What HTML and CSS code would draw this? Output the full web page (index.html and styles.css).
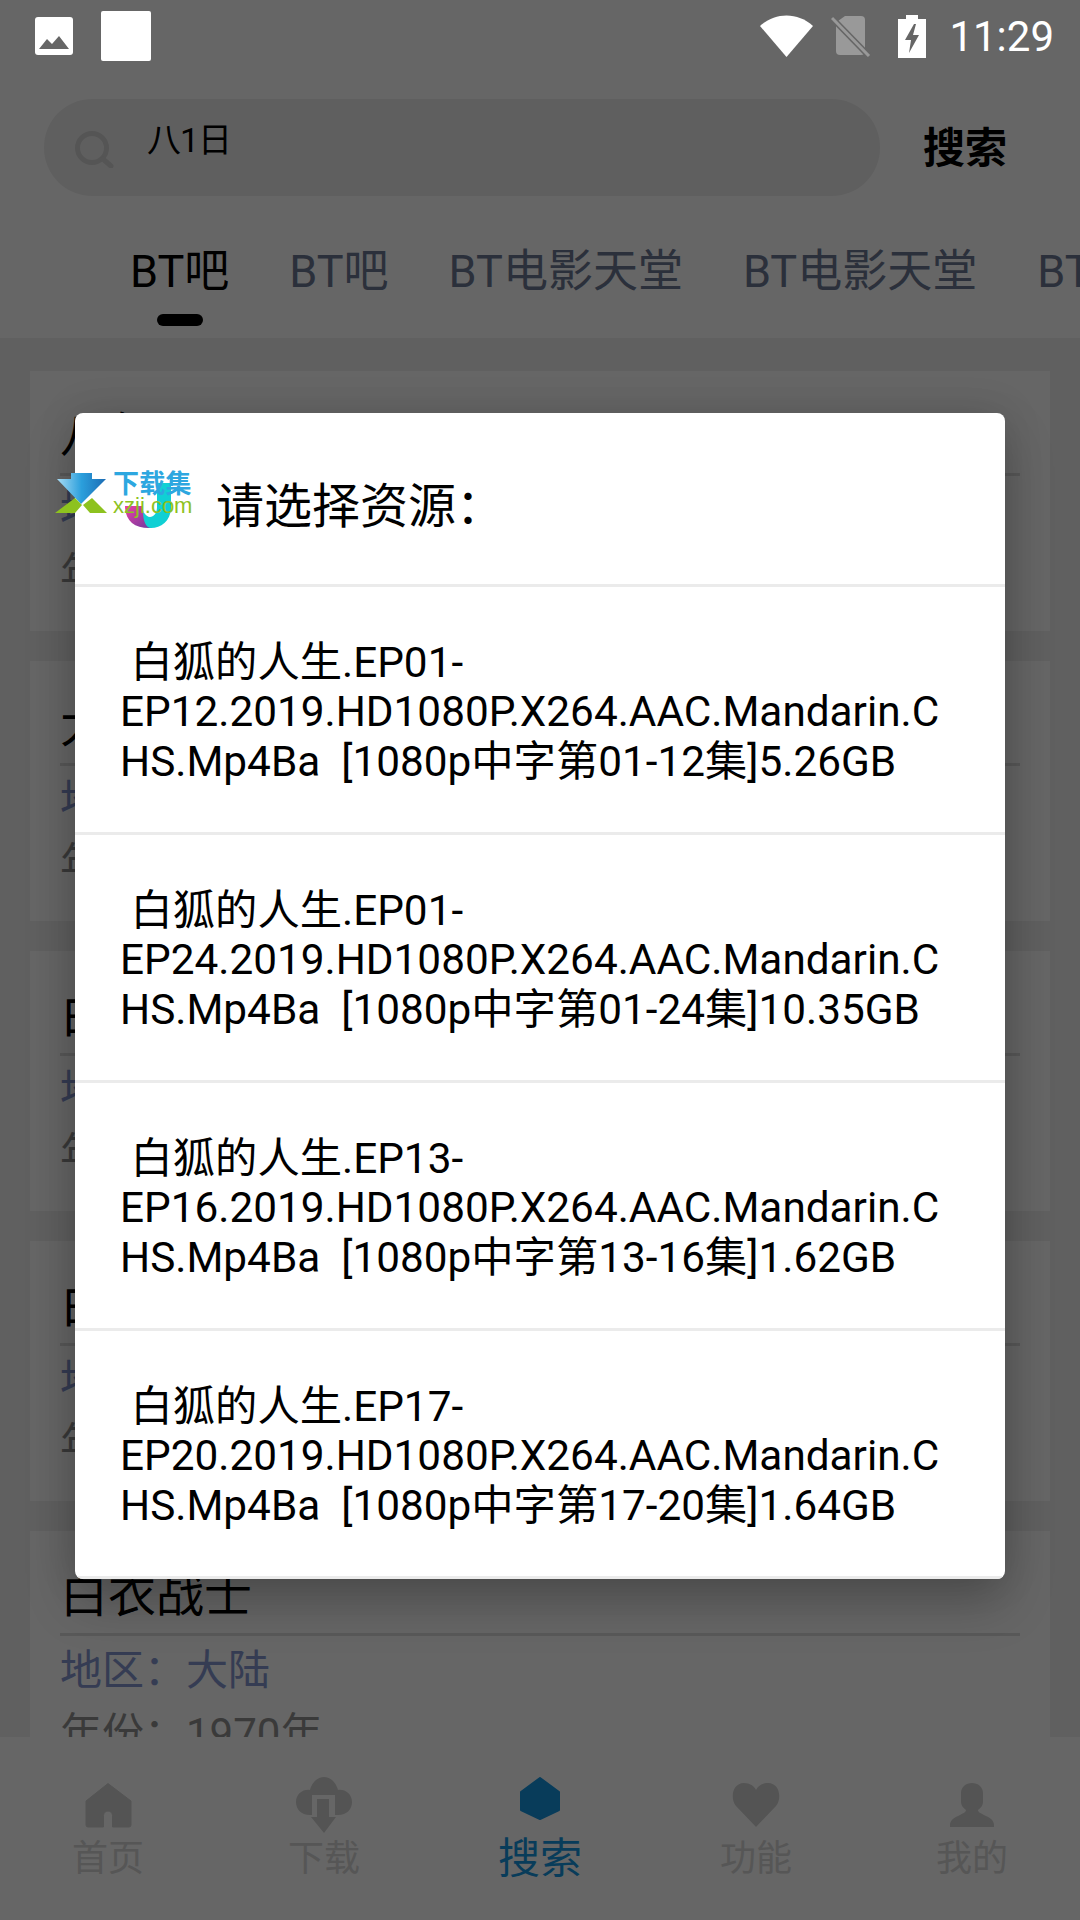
FILE: index.html
```html
<!DOCTYPE html>
<html lang="zh">
<head>
<meta charset="utf-8">
<title>搜索</title>
<link rel="stylesheet" href="styles.css">
</head>
<body>
<div class="app">
  <div class="status">
    <svg class="st-img" viewBox="0 0 38 38"><rect width="38" height="38" rx="3" fill="#fff"/><path d="M4 32 L12 22 L17 27 L24 19 L34 32 Z" fill="#666"/></svg>
    <div class="st-square"></div>
    <div class="st-right">
      <svg class="st-wifi" viewBox="0 0 53 42"><path d="M0 11 C15 -3 38 -3 53 11 L26.500 42 Z" fill="#fff"/></svg>
      <svg class="st-sim" viewBox="0 0 40 42"><path d="M7 6 L14 1 H30 a4 4 0 0 1 4 4 V36 a4 4 0 0 1 -4 4 H9 a4 4 0 0 1 -4 -4 V10 Z" fill="#999"/><path d="M1 3 L38 41" stroke="#666" stroke-width="6"/><path d="M1 3 L38 41" stroke="#999" stroke-width="3"/></svg>
      <svg class="st-bat" viewBox="0 0 28 43"><path d="M8 0 H20 V4 H28 V43 H0 V4 H8 Z" fill="#fff"/><path d="M16 9 L7 25 H13 L11 38 L21 20 H15 L18 9 Z" fill="#666"/></svg>
      <span class="st-time">11:29</span>
    </div>
  </div>

  <header class="head">
    <div class="search-row">
      <div class="pill">
        <svg class="mag" viewBox="0 0 40 38"><circle cx="18" cy="18" r="14.500" fill="none" stroke="#d4d4d4" stroke-width="5"/><path d="M29 29 L37 36" stroke="#d4d4d4" stroke-width="5" stroke-linecap="round"/></svg>
        <span class="query">八1日</span>
      </div>
      <span class="go">搜索</span>
    </div>
    <nav class="tabs">
      <span class="tab on">BT吧</span>
      <span class="tab">BT吧</span>
      <span class="tab">BT电影天堂</span>
      <span class="tab">BT电影天堂</span>
      <span class="tab">BT吧</span>
    </nav>
  </header>

  <main class="list">
    <article class="card"><h3 class="c-title">八佰</h3><p class="c-area">地区：大陆</p><p class="c-year">年份：2020年</p></article>
    <article class="card"><h3 class="c-title">大白</h3><p class="c-area">地区：大陆</p><p class="c-year">年份：2019年</p></article>
    <article class="card"><h3 class="c-title">白狐</h3><p class="c-area">地区：大陆</p><p class="c-year">年份：2019年</p></article>
    <article class="card"><h3 class="c-title">白狐的人生</h3><p class="c-area">地区：大陆</p><p class="c-year">年份：2019年</p></article>
    <article class="card"><h3 class="c-title">白衣战士</h3><p class="c-area">地区：大陆</p><p class="c-year">年份：1970年</p></article>
  </main>

  <footer class="nav">
    <div class="nav-item">
      <svg class="nav-ic" viewBox="0 0 56 56"><path d="M28 6.500 L51 24 V48 a2 2 0 0 1 -2 2 H32.500 V38.500 a4.500 4.500 0 0 0 -9 0 V50 H8 a2 2 0 0 1 -2 -2 V24 Z" fill="#d2d2d2" stroke="#d2d2d2" stroke-width="1" stroke-linejoin="round"/></svg>
      <span>首页</span>
    </div>
    <div class="nav-item">
      <svg class="nav-ic" viewBox="0 0 56 56"><path d="M14 38 C5 38 0 32 0 25 C0 17 7 12 14 13 C16 5 22 0 28 0 C34 0 40 5 42 13 C49 12 56 17 56 25 C56 32 51 38 42 38 Z" fill="#d2d2d2"/><rect x="16" y="18" width="23" height="24" fill="#fff"/><path d="M21 22 H33 V40 H40 L28 56 L15 40 H21 Z" fill="#d2d2d2"/></svg>
      <span>下载</span>
    </div>
    <div class="nav-item active">
      <svg class="nav-ic" viewBox="0 0 56 56"><path d="M28 1 L47 15 V33 L28 42 L9 33 V15 Z" fill="#1596e0" stroke="#1596e0" stroke-width="2" stroke-linejoin="round"/></svg>
      <span>搜索</span>
    </div>
    <div class="nav-item">
      <svg class="nav-ic" viewBox="0 0 56 56"><path d="M28 50 L8 29 C2 22 4 6 16 6 C22 6 26 9 28 13 C30 9 34 6 40 6 C52 6 54 22 48 29 Z" fill="#d2d2d2"/></svg>
      <span>功能</span>
    </div>
    <div class="nav-item">
      <svg class="nav-ic" viewBox="0 0 56 56"><path d="M28 6 C34 6 39 10 39 16 V25 C39 28 37 31 34 33 C34 35 36 36 42 39 C47 41 50 44 50 48 V50 H6 V48 C6 44 9 41 14 39 C20 36 22 35 22 33 C19 31 17 28 17 25 V16 C17 10 22 6 28 6 Z" fill="#d2d2d2"/></svg>
      <span>我的</span>
    </div>
  </footer>

  <div class="scrim">
    <section class="dialog">
      <div class="d-head">
        <svg class="d-logo" viewBox="0 0 50 50"><defs><linearGradient id="jp" x1="0" y1="0" x2="1" y2="1"><stop offset="0" stop-color="#ee3fa5"/><stop offset="1" stop-color="#6a3a9e"/></linearGradient></defs><path d="M0 25 H17 C17 30 20 35 24 37 L27 47 C10 48 0 40 0 25 Z" fill="url(#jp)"/><path d="M32 2 H46 V26 C46 40 36 47 26 47 C21 47 18 40 18 30 C20 34 23 36 25 36 C29 36 32 32 32 26 Z" fill="#10d0d4"/></svg>
        <h2 class="d-title">请选择资源：</h2>
      </div>
      <div class="d-item"> 白狐的人生.EP01-EP12.2019.HD1080P.X264.AAC.Mandarin.CHS.Mp4Ba  [1080p中字第01-12集]5.26GB</div>
      <div class="d-item"> 白狐的人生.EP01-EP24.2019.HD1080P.X264.AAC.Mandarin.CHS.Mp4Ba  [1080p中字第01-24集]10.35GB</div>
      <div class="d-item"> 白狐的人生.EP13-EP16.2019.HD1080P.X264.AAC.Mandarin.CHS.Mp4Ba  [1080p中字第13-16集]1.62GB</div>
      <div class="d-item"> 白狐的人生.EP17-EP20.2019.HD1080P.X264.AAC.Mandarin.CHS.Mp4Ba  [1080p中字第17-20集]1.64GB</div>
    </section>
  </div>

  <div class="mark">
    <svg class="mark-ic" viewBox="0 0 52 42"><defs><linearGradient id="ar" x1="0" y1="0" x2="1" y2="0"><stop offset="0" stop-color="#a8dcf4"/><stop offset=".5" stop-color="#2b9fdc"/><stop offset="1" stop-color="#1c6cb4"/></linearGradient></defs><path d="M16 1 H37 V7 H51 L26 32 L2 7 H16 Z" fill="url(#ar)"/><path d="M0 41 L20 26 L27 33 L20 41 Z" fill="#8dc21f"/><path d="M28 33 L37 26 L52 41 L35 41 Z" fill="#8dc21f"/></svg>
    <div class="mark-text">
      <span class="mark-cn">下载集</span>
      <span class="mark-en">xzji.com</span>
    </div>
  </div>
</div>
</body>
</html>
```

FILE: styles.css
```css
* { box-sizing: border-box; }
html, body { margin: 0; padding: 0; }
body { font-family: Roboto, "Noto Sans CJK SC", sans-serif; background: #fff; color: #000; }

.app {
  position: relative;
  width: 1080px;
  height: 1920px;
  overflow: hidden;
  display: flex;
  flex-direction: column;
  background: #fff;
}

/* status bar sits above the scrim */
.status {
  position: relative;
  z-index: 3;
  height: 66px;
  flex: none;
  display: flex;
  align-items: center;
  padding: 6px 26px 0 35px;
}
.st-img { width: 38px; height: 38px; }
.st-square { width: 50px; height: 50px; margin-left: 28px; background: #fff; border-radius: 2px; }
.st-right { margin-left: auto; display: flex; align-items: center; }
.st-wifi { width: 53px; height: 42px; }
.st-sim { width: 40px; height: 42px; margin-left: 18px; }
.st-bat { width: 28px; height: 43px; margin-left: 27px; }
.st-time { margin-left: 23px; margin-top: 2px; font-size: 42px; line-height: 44px; color: #fff; }

.head { flex: none; height: 272px; background: #fff; }
.search-row { display: flex; align-items: center; padding: 33px 0 0 44px; }
.pill {
  width: 836px;
  height: 97px;
  border-radius: 48px;
  background: #eee;
  display: flex;
  align-items: flex-start;
  padding: 31px 0 0 30px;
}
.mag { width: 40px; height: 38px; flex: none; }
.query { margin-left: 33px; margin-top: -8px; font-size: 34px; line-height: 36px; letter-spacing: -1px; color: #000; }
.go { margin-left: 43px; margin-top: 2px; font-size: 42px; line-height: 48px; font-weight: 700; }

.tabs { display: flex; padding: 48px 0 0 100px; white-space: nowrap; }
.tab {
  position: relative;
  flex: none;
  padding: 0 30px;
  font-size: 45px;
  line-height: 56px;
  color: #6c7894;
}
.tab.on { color: #000; }
.tab.on::after {
  content: "";
  position: absolute;
  left: 50%;
  top: 70px;
  width: 46px;
  height: 12px;
  margin-left: -23px;
  border-radius: 6px;
  background: #000;
}

.list {
  flex: 1;
  min-height: 0;
  overflow: hidden;
  background: #efefef;
  padding: 33px 30px 0;
  display: flex;
  flex-direction: column;
  gap: 30px;
}
.card { flex: none; height: 260px; background: #fff; padding: 0 30px; }
.c-title {
  margin: 0;
  height: 105px;
  padding-top: 37px;
  border-bottom: 3px solid #dedede;
  font-size: 48px;
  line-height: 56px;
  font-weight: 400;
  color: #000;
  white-space: nowrap;
}
.c-area, .c-year { margin: 0; font-size: 42px; line-height: 63px; }
.c-area { color: #8496d0; margin-top: 3px; }
.c-year { color: #919191; }

.nav {
  flex: none;
  height: 183px;
  background: #fff;
  display: grid;
  grid-template-columns: repeat(5, 1fr);
  padding-top: 40px;
}
.nav-item { display: flex; flex-direction: column; align-items: center; color: #d6d6d6; font-size: 36px; line-height: 48px; }
.nav-item.active { color: #1596e0; font-size: 42px; }
.nav-ic { width: 56px; height: 56px; margin-bottom: 2px; flex: none; }

.scrim {
  position: absolute;
  inset: 0;
  z-index: 2;
  background: rgba(0, 0, 0, .6);
  padding: 413px 75px 0;
}
.dialog {
  width: 930px;
  height: 1166px;
  background: #fff;
  border-radius: 8px;
  box-shadow: 0 24px 50px rgba(0, 0, 0, .22), 0 0 40px rgba(0, 0, 0, .12);
  overflow: hidden;
}
.d-head {
  height: 174px;
  display: flex;
  align-items: center;
  padding-left: 50px;
  border-bottom: 3px solid #ebebeb;
}
.d-logo { width: 50px; height: 50px; flex: none; margin-top: 14px; }
.d-title { margin: 16px 0 0 41px; font-size: 48px; line-height: 60px; font-weight: 400; }
.d-item {
  height: 248px;
  display: flex;
  align-items: center;
  padding: 5px 45px 0;
  border-bottom: 3px solid #ebebeb;
  font-size: 42.300px;
  line-height: 49.500px;
  white-space: pre-wrap;
  overflow-wrap: anywhere;
}

.mark {
  position: absolute;
  z-index: 4;
  left: 55px;
  top: 472px;
  display: flex;
  align-items: flex-start;
}
.mark-ic { width: 52px; height: 42px; flex: none; }
.mark-text { display: flex; flex-direction: column; margin-left: 6px; }
.mark-cn { font-size: 26px; line-height: 24px; font-weight: 700; color: #2da7e0; letter-spacing: .2px; }
.mark-en { font-family: "Liberation Sans", sans-serif; font-size: 22px; line-height: 20px; color: #8dc21f; }
```
